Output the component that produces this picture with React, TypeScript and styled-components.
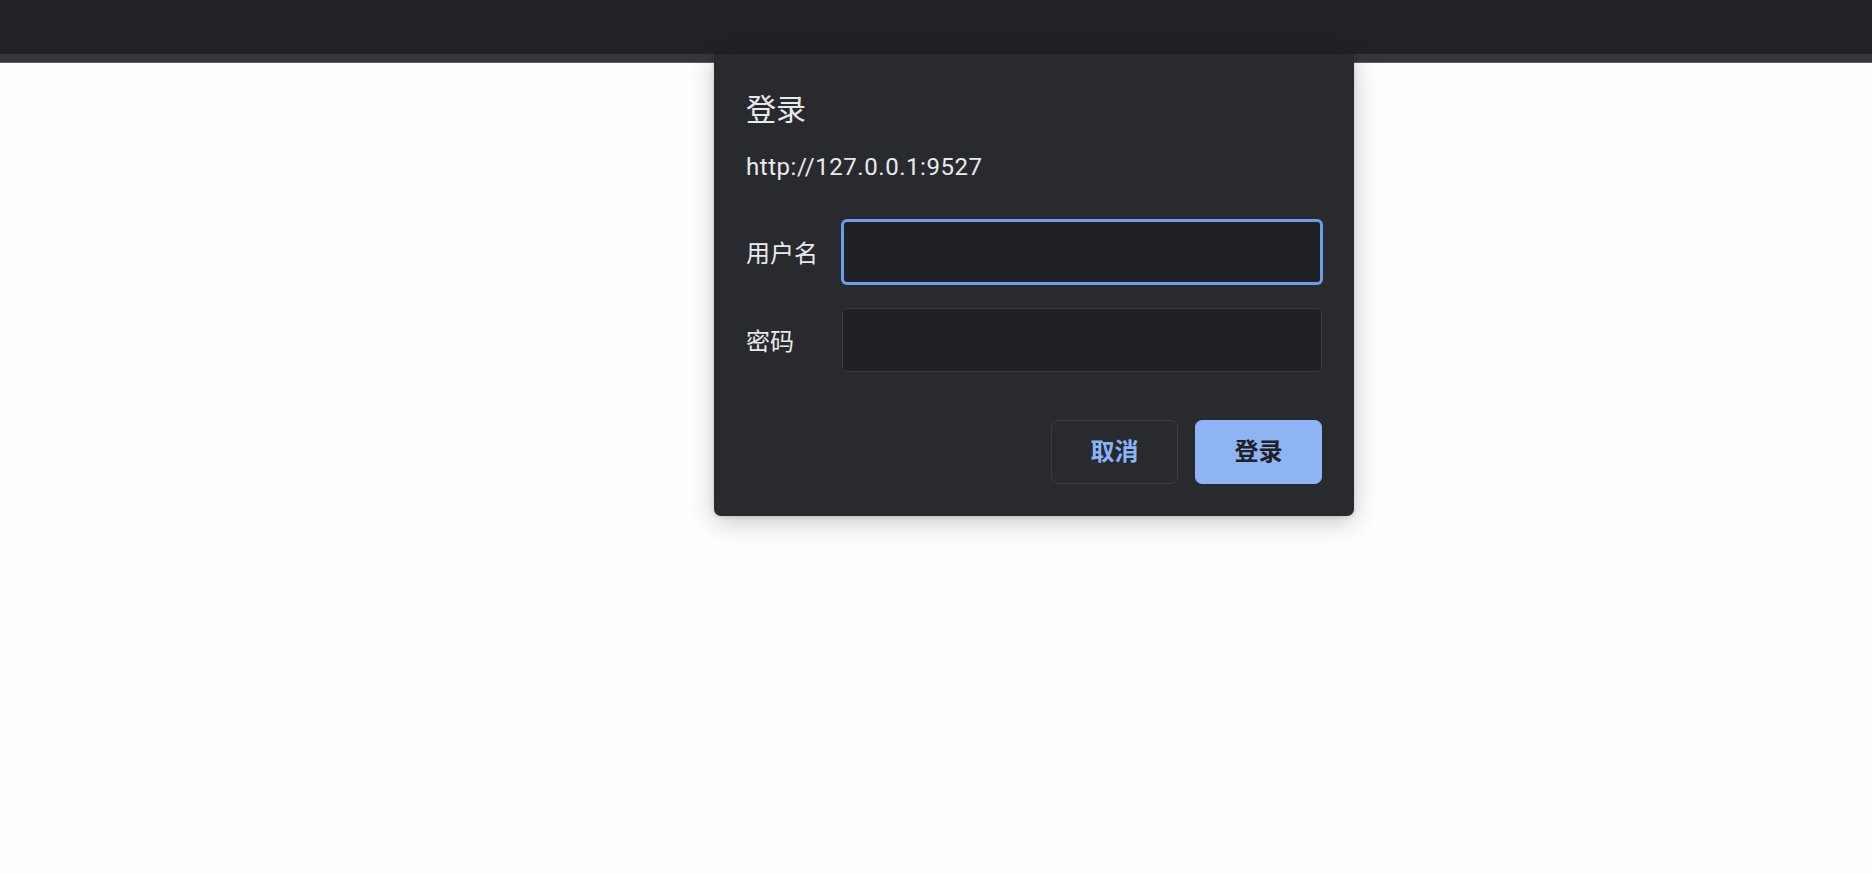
import styled, { createGlobalStyle } from 'styled-components'

const GlobalStyle = createGlobalStyle`
  html, body {
    margin: 0;
    padding: 0;
    background: #fefefe;
  }
  body {
    font-family: Roboto, "Noto Sans CJK SC", sans-serif;
  }
`

const Page = styled.div`
  position: relative;
  width: 100%;
  height: 874px;
  overflow: hidden;
  background: #fefefe;
`

const TopBar = styled.header`
  height: 54px;
  background: #212226;
`

const TabStrip = styled.div`
  height: 8px;
  background: #36373b;
  border-bottom: 1px solid #5c5d61;
`

const Dialog = styled.section`
  position: absolute;
  left: 714px;
  top: 54px;
  width: 640px;
  box-sizing: border-box;
  padding: 35px 32px 32px;
  background: #292a2e;
  border-radius: 0 0 7px 7px;
  box-shadow: 0 6px 26px rgba(0, 0, 0, 0.22), 0 1px 4px rgba(0, 0, 0, 0.12);
  color: #e8eaed;
  display: flex;
  flex-direction: column;
`

const Title = styled.h2`
  margin: 0;
  font-family: "Noto Sans CJK SC", sans-serif;
  font-size: 30px;
  font-weight: 400;
  line-height: 36px;
`

const Origin = styled.p`
  margin: 28px 0 0;
  font-family: Roboto, sans-serif;
  font-size: 24px;
  line-height: 29px;
  letter-spacing: 0.55px;
`

const Form = styled.div`
  margin-top: 38px;
  display: flex;
  flex-direction: column;
  gap: 24px;
`

const Row = styled.label`
  display: grid;
  grid-template-columns: 96px 1fr;
  align-items: center;
`

const Label = styled.span`
  font-family: "Noto Sans CJK SC", sans-serif;
  font-size: 24px;
  line-height: 30px;
`

const Field = styled.input<{ $focused?: boolean }>`
  height: 64px;
  box-sizing: border-box;
  width: 100%;
  margin: 0;
  padding: 0 16px;
  background: #202124;
  border: ${(p) => (p.$focused ? '2px solid #6c9deb' : '1px solid #3c3d41')};
  box-shadow: ${(p) => (p.$focused ? '0 0 0 1px #6c9deb' : 'none')};
  border-radius: 5px;
  color: #e8eaed;
  font-size: 24px;
  outline: none;
`

const Actions = styled.div`
  margin-top: 48px;
  display: flex;
  justify-content: flex-end;
  gap: 17px;
`

const Button = styled.button<{ $primary?: boolean }>`
  width: 127px;
  height: 64px;
  box-sizing: border-box;
  padding: 0 0 4px;
  border-radius: 7px;
  border: 1px solid ${(p) => (p.$primary ? '#8fb4f5' : '#3c3d41')};
  background: ${(p) => (p.$primary ? '#8fb4f5' : 'transparent')};
  color: ${(p) => (p.$primary ? '#202124' : '#8ab4f8')};
  font-family: "Noto Sans CJK SC", sans-serif;
  font-size: 24px;
  font-weight: 700;
  line-height: 30px;
  cursor: pointer;
`

export default function App() {
  return (
    <>
      <GlobalStyle />
      <Page>
        <TopBar />
        <TabStrip />
        <Dialog>
          <Title>登录</Title>
          <Origin>http://127.0.0.1:9527</Origin>
          <Form>
            <Row>
              <Label>用户名</Label>
              <Field $focused type='text' />
            </Row>
            <Row>
              <Label>密码</Label>
              <Field type='password' />
            </Row>
          </Form>
          <Actions>
            <Button>取消</Button>
            <Button $primary>登录</Button>
          </Actions>
        </Dialog>
      </Page>
    </>
  )
}
